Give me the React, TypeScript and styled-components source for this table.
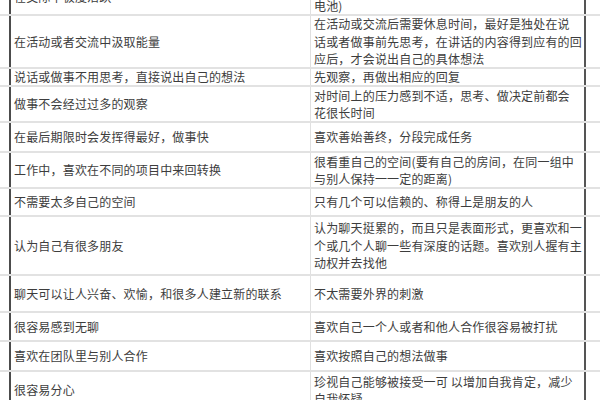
import React from "react";
import styled, { createGlobalStyle } from "styled-components";

const Global = createGlobalStyle`
  html, body { margin: 0; padding: 0; background: #ffffff; overflow: hidden; }
  body { font-family: "Noto Sans CJK SC", "Noto Sans", sans-serif; }
`;

const Sheet = styled.div`
  margin-top: -20px;
  width: 600px;
  display: flex;
  flex-direction: column;
`;

const Row = styled.div<{ $h: number }>`
  box-sizing: border-box;
  height: ${(p) => p.$h}px;
  display: grid;
  grid-template-columns: 9px 302px 275px 1fr;
  border-bottom: 2px solid #e2e2e2;
`;

const EdgeCell = styled.div``;

const Cell = styled.div<{ $side: "left" | "right" }>`
  box-sizing: border-box;
  display: flex;
  flex-direction: column;
  justify-content: center;
  overflow: hidden;
  padding-left: 3px;
  font-size: 12px;
  line-height: 17.5px;
  letter-spacing: 0.18px;
  color: #3d3d3d;
  white-space: nowrap;
  border-left: ${(p) => (p.$side === "left" ? "2px solid #4c4c4c" : "none")};
  border-right: ${(p) =>
    p.$side === "left" ? "1px solid #e0e0e0" : "2px solid #555555"};
`;

const Line = styled.span`
  display: block;
`;

type RowData = { h: number; left: string; right: string[] };

const rows: RowData[] = [
  { h: 36, left: "在交际中极度活跃", right: ["在独处中恢复精力（就像给自己充", "电池)"] },
  {
    h: 53,
    left: "在活动或者交流中汲取能量",
    right: [
      "在活动或交流后需要休息时间，最好是独处在说",
      "话或者做事前先思考，在讲话的内容得到应有的回",
      "应后，才会说出自己的具体想法",
    ],
  },
  { h: 18, left: "说话或做事不用思考，直接说出自己的想法", right: ["先观察，再做出相应的回复"] },
  {
    h: 36,
    left: "做事不会经过过多的观察",
    right: ["对时间上的压力感到不适，思考、做决定前都会", "花很长时间"],
  },
  { h: 30, left: "在最后期限时会发挥得最好，做事快", right: ["喜欢善始善终，分段完成任务"] },
  {
    h: 36,
    left: "工作中，喜欢在不同的项目中来回转换",
    right: ["很看重自己的空间(要有自己的房间，在同一组中", "与别人保持一一定的距离)"],
  },
  { h: 28, left: "不需要太多自己的空间", right: ["只有几个可以信赖的、称得上是朋友的人"] },
  {
    h: 59,
    left: "认为自己有很多朋友",
    right: [
      "认为聊天挺累的，而且只是表面形式，更喜欢和一",
      "个或几个人聊一些有深度的话题。喜欢别人握有主",
      "动权并去找他",
    ],
  },
  { h: 37, left: "聊天可以让人兴奋、欢愉，和很多人建立新的联系", right: ["不太需要外界的刺激"] },
  { h: 29, left: "很容易感到无聊", right: ["喜欢自己一个人或者和他人合作很容易被打扰"] },
  { h: 30, left: "喜欢在团队里与别人合作", right: ["喜欢按照自己的想法做事"] },
  {
    h: 38,
    left: "很容易分心",
    right: ["珍视自己能够被接受一可 以增加自我肯定，减少", "自我怀疑"],
  },
];

export default function App() {
  return (
    <>
      <Global />
      <Sheet>
        {rows.map((r, i) => (
          <Row key={i} $h={r.h}>
            <EdgeCell />
            <Cell $side="left">
              <Line>{r.left}</Line>
            </Cell>
            <Cell $side="right">
              {r.right.map((t, j) => (
                <Line key={j}>{t}</Line>
              ))}
            </Cell>
            <EdgeCell />
          </Row>
        ))}
      </Sheet>
    </>
  );
}
